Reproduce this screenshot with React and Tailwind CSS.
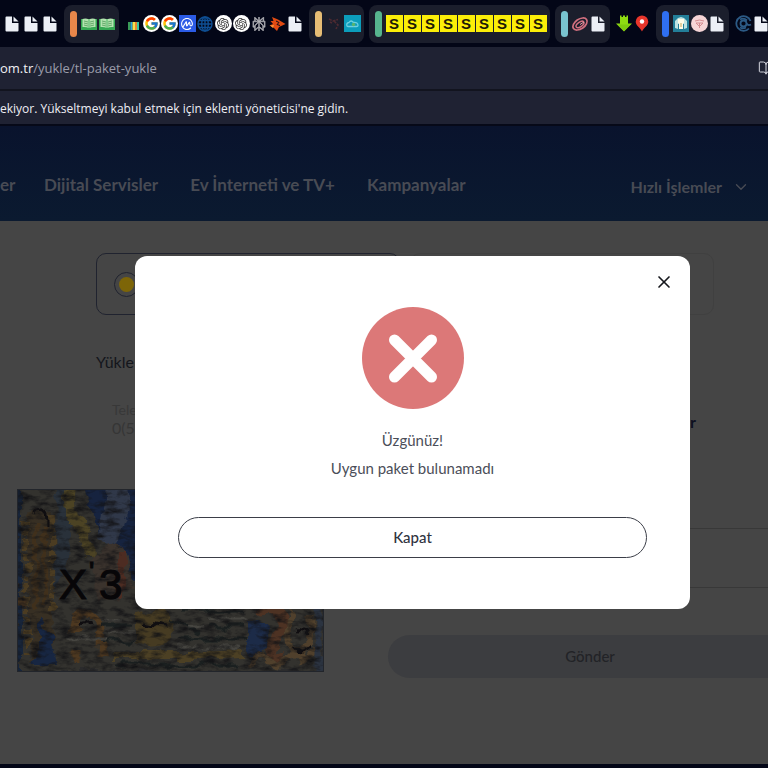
import { BookOpen, ChevronDown, X } from 'lucide-react';
import { FcGoogle } from 'react-icons/fc';
import { SiCoinmarketcap, SiOpenai, SiPerplexity } from 'react-icons/si';

function FileIcon() {
  return (
    <svg viewBox="0 0 14 16" className="h-4 w-3.5">
      <path d="M1.500 0.500H7V7H13.500V14.500Q13.500 15.500 12.500 15.500H1.500Q0.500 15.500 0.500 14.500V1.500Q0.500 0.500 1.500 0.500Z" fill="#eceff6" />
      <path d="M8.500 0.500L13.500 5.500H8.500Z" fill="#eceff6" />
    </svg>
  );
}

function BookTabIcon() {
  return (
    <svg viewBox="0 0 16 12" className="h-3 w-4">
      <rect y="1" width="16" height="11" fill="#35a853" />
      <path d="M1.5 1Q5 0 8 1.5Q11 0 14.5 1V9Q11 8.500 8 10Q5 8.500 1.500 9Z" fill="#b4e3b0" />
      <path d="M3 3L7 4M3 5L7 6M3 7L7 8M13 3L9 4M13 5L9 6M13 7L9 8" stroke="#4f9c58" strokeWidth="0.8" />
      <path d="M8 1.500V10" stroke="#35a853" strokeWidth="0.8" />
    </svg>
  );
}

function BarsIcon() {
  return (
    <svg viewBox="0 0 11 8" className="mt-1 h-2 w-[11px]">
      <rect width="2.500" height="8" fill="#3a9a58" />
      <rect x="2.500" width="2" height="8" fill="#2aa7d8" />
      <rect x="4.500" width="2.500" height="8" fill="#f3e14c" />
      <rect x="7" width="2" height="8" fill="#e8862f" />
      <rect x="9" width="2" height="8" fill="#34c6a0" />
    </svg>
  );
}

function GoogleIcon() {
  return (
    <span className="flex size-[17px] items-center justify-center rounded-full bg-white">
      <FcGoogle className="size-[15px]" />
    </span>
  );
}

function MarketIcon() {
  return (
    <span className="flex size-[17px] items-center justify-center bg-[#2b5be6]">
      <SiCoinmarketcap className="size-3 text-white" />
    </span>
  );
}

function GlobeIcon() {
  return (
    <svg viewBox="0 0 16 16" className="size-4" fill="none" stroke="#0f4f94" strokeWidth="1.4">
      <circle cx="8" cy="8" r="7" />
      <ellipse cx="8" cy="8" rx="3.300" ry="7" />
      <path d="M1 8H15M8 1V15M2 4.500H14M2 11.500H14" />
    </svg>
  );
}

function ChatIcon() {
  return (
    <span className="flex size-[17px] items-center justify-center rounded-full bg-white">
      <SiOpenai className="size-3 text-[#333]" />
    </span>
  );
}

function AsteriskIcon() {
  return <SiPerplexity className="size-3.5 stroke-[#b9b9bd] stroke-1 text-[#b9b9bd]" />;
}

function FoxIcon() {
  return (
    <svg viewBox="0 0 17 16" className="h-4 w-[17px]">
      <path d="M3 1L9 3.500L16.500 8L10 11L8 15L5 12L0.500 9.500L4 8L1.500 5L4.500 5Z" fill="#e04a12" />
      <path d="M7 5L10 6.500L8 8.500L11 9.500" stroke="#0b0a16" fill="none" />
      <path d="M1 9.500L5 9L4 12Z" fill="#f79a3a" />
    </svg>
  );
}

function EmberIcon() {
  return (
    <svg viewBox="0 0 16 16" className="size-4" fill="none" stroke="#4d2a31" strokeWidth="1.600" strokeDasharray="3 1">
      <path d="M3 3L7 5L12 3.500M8 5L12 9L10 13M4 6L6 7" />
    </svg>
  );
}

function CloudIcon() {
  return (
    <svg viewBox="0 0 17 17" className="size-[17px]">
      <rect width="17" height="17" fill="#0c9dbb" />
      <path d="M3 11Q2 8 5 7.500Q7 4.500 9.500 7.500Q14 7 14 10.500Q14 11.500 12.500 11.500H4Q3 11.500 3 11Z" fill="none" stroke="#6fd0e0" strokeWidth="1.300" />
      <circle cx="9.500" cy="9.500" r="1.700" fill="#58b46f" />
    </svg>
  );
}

function SIcon() {
  return (
    <span className="flex size-[17px] items-center justify-center bg-[#fbee08] text-[15px] leading-none font-bold text-[#1c1906]">
      S
    </span>
  );
}

function SwirlIcon() {
  return (
    <svg viewBox="0 0 18 16" className="h-4 w-[18px]" fill="none" stroke="#d2707f">
      <ellipse cx="9" cy="8" rx="8" ry="4.800" transform="rotate(-35 9 8)" strokeWidth="1.700" />
      <ellipse cx="9" cy="8.500" rx="4.500" ry="2.300" transform="rotate(-35 9 8.500)" strokeWidth="1.500" />
      <path d="M9 8.500L13 6" stroke="#e8a3ab" />
    </svg>
  );
}

function DownloadIcon() {
  return (
    <svg viewBox="0 0 16 17" className="h-[17px] w-4">
      <path d="M4 0.500H5.500V2H7V0.500H9V2H10.500V0.500H12V8.500H16L8 16.500L0 8.500H4Z" fill="#8fdc12" />
      <path d="M2 9.500L8 15.500L14 9.500" fill="#7fcc0f" />
    </svg>
  );
}

function PinIcon() {
  return (
    <svg viewBox="0 0 14 17" className="h-[17px] w-3.5">
      <path d="M7 0.500A6.300 6.300 0 0 1 13.300 6.800C13.300 10.500 9 12.500 7 16.500C5 12.500 0.700 10.500 0.700 6.800A6.300 6.300 0 0 1 7 0.500Z" fill="#e8352b" />
      <circle cx="7" cy="6.500" r="2.200" fill="#fff" />
    </svg>
  );
}

function TealIcon() {
  return (
    <svg viewBox="0 0 16 17" className="h-[17px] w-4">
      <rect width="16" height="17" fill="#237f99" />
      <path d="M2 13V6L5 3L8 2L11 3L14 6V13L11 14V9H5V14Z" fill="#bfe3e2" />
      <path d="M5 4H11V8H10V14H6V8H5Z" fill="#fffbe6" />
      <path d="M8 8V12" stroke="#c9a55a" />
    </svg>
  );
}

function RoseIcon() {
  return (
    <svg viewBox="0 0 17 17" className="size-[17px]">
      <circle cx="8.500" cy="8.500" r="8.500" fill="#f6d5d6" />
      <path d="M4 6Q8.500 4 13 6M5 8H12L8.500 11.500Z" fill="none" stroke="#d48d91" />
      <path d="M8.500 8V13" stroke="#d48d91" />
    </svg>
  );
}

function OrbitIcon() {
  return (
    <svg viewBox="0 0 17 17" className="size-[17px]" fill="none" stroke="#2c5a85" strokeWidth="1.800">
      <path d="M15.500 6A7.300 7.300 0 1 0 14 13.500" />
      <circle cx="8.500" cy="8.500" r="3" />
      <path d="M5 4.500Q9 2.500 12 5.500M11.500 8.500Q13 11 16 9.500M5 12.500Q8 14 11 12.500" />
    </svg>
  );
}

const tabs = [
  { icons: [FileIcon, FileIcon, FileIcon], gap: 'gap-px' },
  { bar: 'bg-[#e8874a]', icons: [BookTabIcon, BookTabIcon] },
  {
    icons: [
      BarsIcon,
      GoogleIcon,
      GoogleIcon,
      MarketIcon,
      GlobeIcon,
      ChatIcon,
      ChatIcon,
      AsteriskIcon,
      FoxIcon,
      FileIcon,
    ],
  },
  { bar: 'bg-[#e6bd75]', icons: [EmberIcon, CloudIcon] },
  { bar: 'bg-[#57b58e]', icons: [SIcon, SIcon, SIcon, SIcon, SIcon, SIcon, SIcon, SIcon, SIcon] },
  { bar: 'bg-[#79c3cf]', icons: [SwirlIcon, FileIcon] },
  { icons: [DownloadIcon, PinIcon] },
  { bar: 'bg-[#2f6ff0]', icons: [TealIcon, RoseIcon, FileIcon] },
  { icons: [OrbitIcon, FileIcon] },
];

function TabGroup({ bar, icons, gap = '' }) {
  return (
    <div className={`flex h-[38px] shrink-0 items-center ${gap} ${bar ? 'rounded-lg bg-[#1b1e2c] pr-[3px] pl-1.5' : ''}`}>
      {bar && <span className={`mr-[3px] h-[26px] w-[7px] rounded-full ${bar}`} />}
      {icons.map((Icon, i) => (
        <button key={i} type="button" aria-label={`Sekme ${i + 1}`} className="flex w-[18px] items-center justify-center">
          <Icon />
        </button>
      ))}
    </div>
  );
}

function BrowserChrome() {
  return (
    <div className="font-['Open_Sans','Noto_Sans',sans-serif]">
      <div className="flex h-[47px] items-center gap-[5px] overflow-hidden bg-[#030617] pl-[3px] font-['Liberation_Sans',sans-serif]">
        {tabs.map((group, i) => (
          <TabGroup key={i} {...group} />
        ))}
      </div>
      <div className="flex h-11 items-center justify-between overflow-hidden border-b-2 border-[#12141f] bg-[#1f2233] text-[13px] whitespace-nowrap">
        <p className="pt-0.5 text-[#9a9caa]">
          <span className="text-[#f0f0f4]">om.tr</span>/yukle/tl-paket-yukle
        </p>
        <BookOpen className="-mr-1.5 size-4 text-[#d5d6df]" strokeWidth={1.5} />
      </div>
      <div className="flex h-[35px] items-center overflow-hidden border-b-2 border-[#060918] bg-[#1f2233] pt-0.5 text-xs whitespace-nowrap text-[#eeeef3]">
        ekiyor. Yükseltmeyi kabul etmek için eklenti yöneticisi'ne gidin.
      </div>
    </div>
  );
}

function SiteHeader() {
  return (
    <header className="flex h-[95px] items-center justify-between bg-linear-to-b from-[#09132d] to-[#0b1a30] pt-6 pr-[18px] font-bold whitespace-nowrap text-[#484b54]">
      <nav className="flex gap-8 pb-0.5 text-[17px]">
        <a href="#" className="w-3">er</a>
        <a href="#">Dijital Servisler</a>
        <a href="#">Ev İnterneti ve TV+</a>
        <a href="#">Kampanyalar</a>
      </nav>
      <button type="button" className="flex items-center gap-2.5 pt-0.5 text-base">
        Hızlı İşlemler
        <ChevronDown className="size-[18px]" strokeWidth={1.8} />
      </button>
    </header>
  );
}

function CaptchaPicture() {
  return (
    <svg viewBox="0 0 307 183" className="h-[183px] w-full" role="img" aria-label="Güvenlik kodu">
      <defs>
        <filter id="wobble" x="0" y="0" width="100%" height="100%" colorInterpolationFilters="sRGB">
          <feTurbulence type="fractalNoise" baseFrequency="0.05 0.07" numOctaves="3" seed="7" result="n" />
          <feDisplacementMap in="SourceGraphic" in2="n" scale="14" xChannelSelector="R" yChannelSelector="G" />
          <feGaussianBlur stdDeviation="0.7" />
        </filter>
        <filter id="grain" x="0" y="0" width="100%" height="100%" colorInterpolationFilters="sRGB">
          <feTurbulence type="fractalNoise" baseFrequency="0.07 0.16" numOctaves="4" seed="3" />
          <feColorMatrix values="0 0 0 0 0.07  0 0 0 0 0.07  0 0 0 0 0.08  2.200 0 0 0 -0.900" />
        </filter>
      </defs>
      <rect width="307" height="183" fill="#2b2b2c" />
      <g filter="url(#wobble)">
        <rect width="307" height="183" fill="#33322e" />
        <path d="M70 0H307V110H130L112 80L95 50L80 40Z" fill="#16233f" />
        <path d="M90 0L82 48L100 55L112 20L108 0Z" fill="#303849" />
        <path d="M0 0H5V183H0Z" fill="#17253b" />
        <path d="M40 0H58L50 80L38 100Z" fill="#29313a" />
        <path d="M12 24Q22 16 36 26V160Q36 178 14 172Z" fill="#372f23" />
        <path d="M10 30V165M35 26V122" stroke="#4b3c22" strokeWidth="6" strokeDasharray="7 4" />
        <path d="M19 34V118M27 34V118" stroke="#40301c" strokeWidth="4" />
        <path d="M22 128V158L14 176H40L34 150Z" fill="#172642" />
        <path d="M54 0Q48 20 60 34T72 70" stroke="#4c4324" strokeWidth="10" fill="none" />
        <path d="M76 70L90 50L108 60L118 100L100 112H78Z" fill="#3b332d" />
        <path d="M105 65V110" stroke="#4d2c22" strokeWidth="8" />
        <path d="M0 112H10M58 144Q54 122 70 124T84 164M60 160V176" stroke="#4d3820" strokeWidth="9" fill="none" />
        <path d="M118 126Q150 112 156 134T132 158L118 154Z" fill="#463b22" />
        <path d="M96 166H180L226 164" stroke="#4c4024" strokeWidth="8" fill="none" />
        <path d="M84 137H114M154 132L182 144M164 122H230M190 138H226M86 152H116M160 150H230M100 176H220" stroke="#1b2020" strokeWidth="3" fill="none" />
        <path d="M92 144H118M160 158H222M190 130H232M170 139H186M50 150H90M90 132H106" stroke="#464540" strokeWidth="3" />
        <path d="M231 134Q248 130 252 152L240 166H231Z" fill="#1c2b48" />
        <path d="M242 122Q276 118 260 148T268 166" stroke="#4d3223" strokeWidth="11" fill="none" />
        <path d="M276 120Q266 160 280 162T294 128M234 174Q242 158 252 172T270 172T286 172L300 160" stroke="#50402c" strokeWidth="7" fill="none" />
        <path d="M302 118V180" stroke="#2b3340" strokeWidth="7" />
        <path d="M18 24Q30 16 30 34M62 134Q70 130 72 140M124 134L150 138M280 142Q288 140 290 150M276 158Q282 168 292 158" stroke="#0f0d10" strokeWidth="3" fill="none" />
      </g>
      <rect width="307" height="183" filter="url(#grain)" />
      <g fill="#070608" stroke="#070608" className="font-['Liberation_Sans',sans-serif]">
        <text x="42" y="110" fontSize="42">X</text>
        <text x="72" y="92" fontSize="28">'</text>
        <text x="82" y="110" fontSize="42">3</text>
      </g>
      <rect x="0.500" y="0.500" width="306" height="182" fill="none" stroke="#22252b" />
    </svg>
  );
}

function TopUpForm() {
  return (
    <form className="pt-8">
      <div className="mr-[54px] ml-24 grid grid-cols-2 gap-2.5">
        <label className="flex h-[62px] items-center rounded-[10px] border border-[#20232f] px-[17px]">
          <input
            type="radio"
            name="type"
            defaultChecked
            aria-label="Paket"
            className="size-[25px] appearance-none rounded-full border border-[#20232f] bg-[#7d6508] bg-clip-content p-1"
          />
        </label>
        <label className="flex h-[62px] items-center rounded-[10px] border border-[#404040] px-[17px]">
          <input type="radio" name="type" aria-label="TL" className="size-[25px] appearance-none rounded-full border border-[#3c3c3c]" />
        </label>
      </div>
      <div className="flex gap-16 pl-[17px]">
        <div className="w-[307px] shrink-0 pt-[35px]">
          <h2 className="pl-[79px] text-base leading-6 text-[#14161c]">Yükle</h2>
          <div className="mb-[51px] pt-7 pl-[95px]">
            <label htmlFor="phone" className="block text-sm leading-4 text-[#383838]">
              Tele
            </label>
            <input id="phone" type="tel" defaultValue="0(5" className="block h-5 w-32 text-base text-[#363636]" />
          </div>
          <CaptchaPicture />
        </div>
        <div className="-mr-6 grow pt-[95px]">
          <h2 className="pl-[302px] text-base leading-6 font-bold text-[#0d1020]">r</h2>
          <input
            type="text"
            aria-label="Güvenlik kodu"
            className="mt-[94px] block h-[60px] w-full rounded-[10px] border border-[#383838]"
          />
          <button type="button" className="mt-[47px] h-[43px] w-full rounded-full bg-[#3c3d40] text-[15px] font-medium text-[#222327]">
            Gönder
          </button>
        </div>
      </div>
    </form>
  );
}

function ErrorDialog() {
  return (
    <div className="absolute inset-x-0 top-[35px] flex justify-center pl-[57px]">
      <div role="dialog" aria-modal="true" className="relative w-full max-w-[555px] rounded-xl bg-white px-[43px] pt-[51px] pb-[51px] text-center text-[15px] text-[#4b4e59]">
        <button type="button" aria-label="Kapat" className="absolute top-4 right-4 text-[#16181d]">
          <X className="size-5" strokeWidth={2} />
        </button>
        <svg viewBox="0 0 102 102" className="mx-auto size-[102px]">
          <circle cx="51" cy="51" r="51" fill="#dc7878" />
          <path d="M32.500 33L69.500 70M69.500 33L32.500 70" stroke="#fff" strokeWidth="11" strokeLinecap="round" />
        </svg>
        <p className="mt-[17px] leading-7">Üzgünüz!</p>
        <p className="leading-7">Uygun paket bulunamadı</p>
        <button type="button" className="mt-[35px] h-[41px] w-full rounded-full border border-[#3b3e48] font-medium text-[#30343f]">
          Kapat
        </button>
      </div>
    </div>
  );
}

export default function App() {
  return (
    <div className="flex min-h-screen flex-col overflow-hidden bg-[#030617]">
      <BrowserChrome />
      <div className="mb-1 flex grow flex-col bg-[#454545] font-['Lato',sans-serif]">
        <SiteHeader />
        <main className="relative grow">
          <TopUpForm />
          <ErrorDialog />
        </main>
      </div>
    </div>
  );
}
